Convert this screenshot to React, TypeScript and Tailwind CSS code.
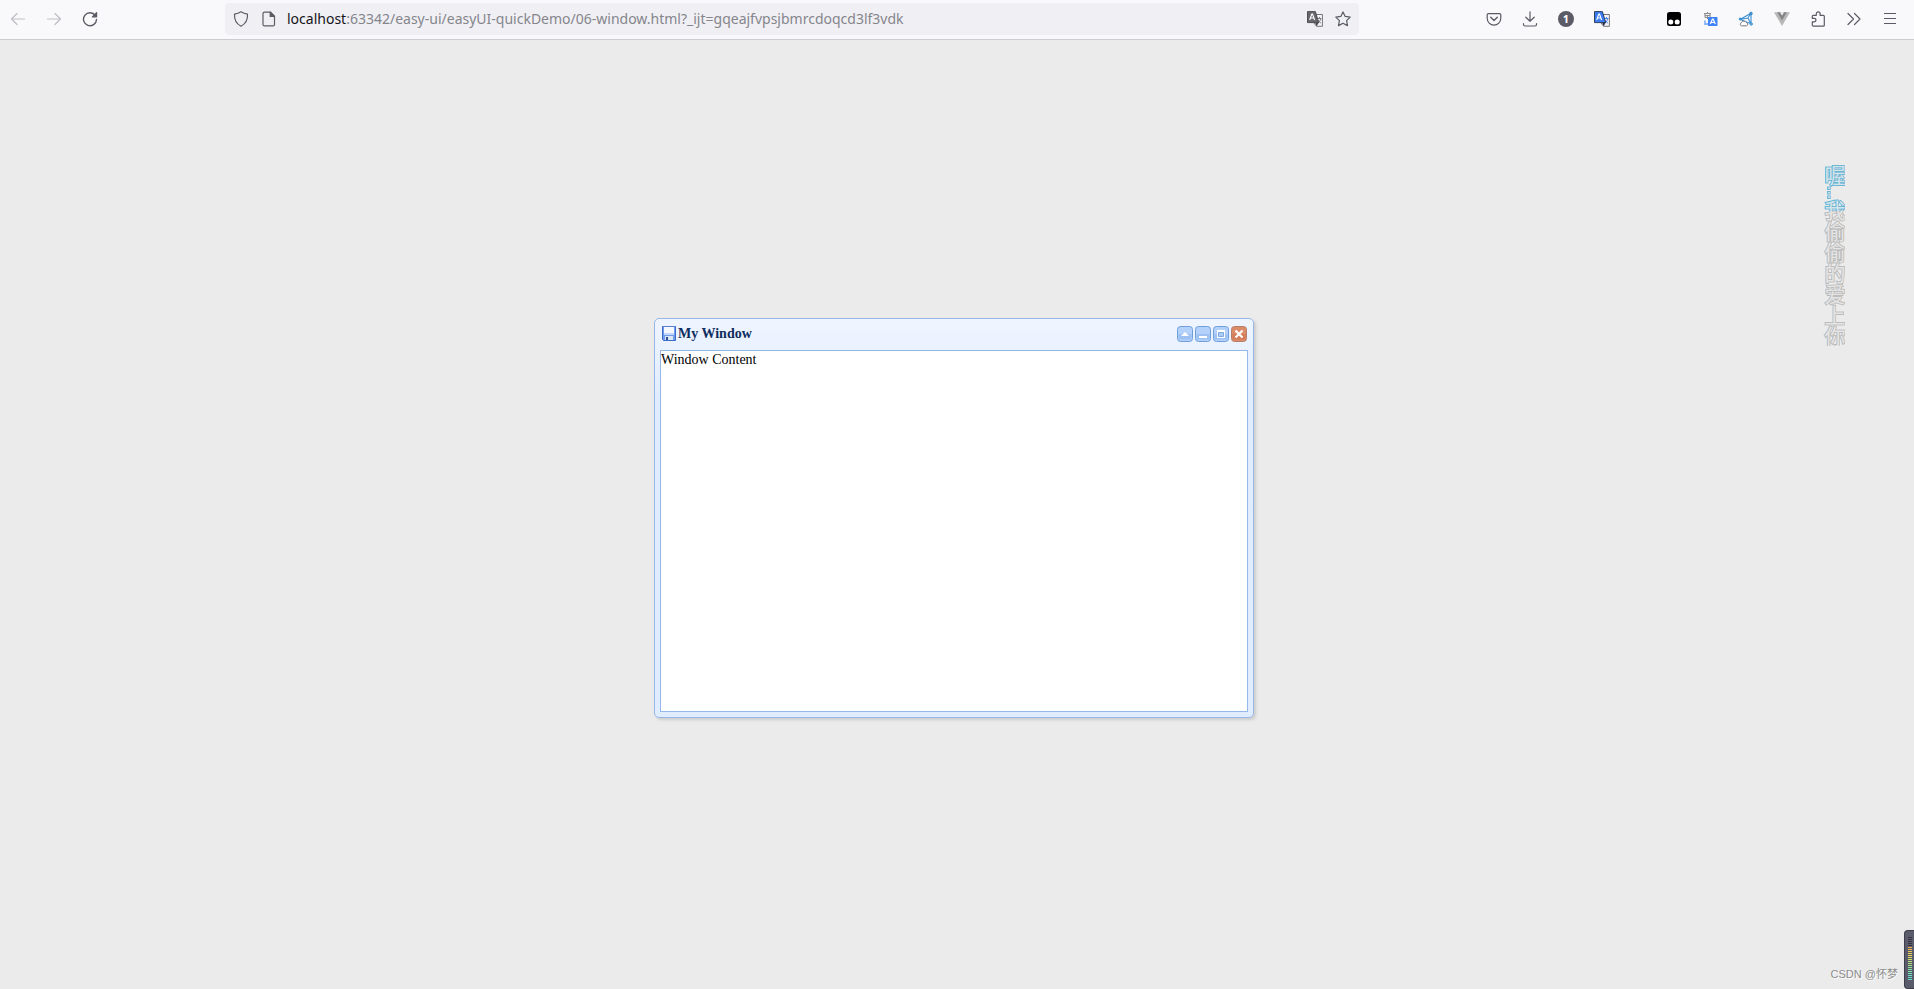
import type { ReactNode } from 'react';

interface ToolButtonProps {
  label: string;
  disabled?: boolean;
  children: ReactNode;
}

function ToolButton({ label, disabled, children }: ToolButtonProps) {
  return (
    <button
      aria-label={label}
      disabled={disabled}
      className="flex h-8 w-9 shrink-0 items-center justify-center rounded text-[#5b5b66] disabled:text-[#bfbfc4]"
    >
      {children}
    </button>
  );
}

function LineIcon({ children }: { children: ReactNode }) {
  return (
    <svg
      viewBox="0 0 16 16"
      className="size-4 shrink-0"
      fill="none"
      stroke="currentColor"
      strokeWidth="1.2"
      strokeLinecap="round"
      strokeLinejoin="round"
    >
      {children}
    </svg>
  );
}

function TranslateIcon({ front, glyph, back }: { front: string; glyph: string; back: string }) {
  return (
    <svg viewBox="0 0 16 16" className="size-4 shrink-0">
      <path d="M8 3.5h7.4v11.8H9.5L7 12z" fill="#f4f4f6" stroke="#55555c" strokeWidth="0.8" />
      <path d="M10.500 7.500h4M12.500 6v1.500M13.800 7.500c-.3 2-1.600 3.500-3 4.500M11 9c.6 1.300 1.800 2.500 3 3" stroke={glyph} strokeWidth="0.9" fill="none" />
      <path d="M.5.6h7.900l3.300 11H.5z" fill={front} stroke={back} strokeWidth="0.9" />
      <path d="m8 11.600 1.700 3.600 2-3.600z" fill={back} />
      <path d="m2.700 9 2.100-6h.7l2.100 6M3.500 7h3.300" stroke="#fff" strokeWidth="1.1" fill="none" />
    </svg>
  );
}

function AddressBar() {
  return (
    <div className="flex h-8 min-w-0 flex-1 items-center rounded bg-[#f0f0f4] px-2 text-[#5b5b66]">
      <button aria-label="Tracking protection" className="mr-3">
        <LineIcon>
          <path d="M8 .8c1.900 1.300 4 2 6.500 2.300.3 5.200-1.800 9.700-6.500 12.100C3.300 12.800 1.200 8.300 1.500 3.100 4 2.800 6.100 2.100 8 .8z" />
        </LineIcon>
      </button>
      <button aria-label="Site information" className="mr-2">
        <LineIcon>
          <path d="M3.500 1.100h6l4 4v8.300a1.500 1.500 0 0 1-1.500 1.500H3.500A1.500 1.500 0 0 1 2 13.400V2.600a1.500 1.500 0 0 1 1.500-1.500z" />
          <path d="M9.200 1.200v4.200h4.200z" fill="currentColor" />
        </LineIcon>
      </button>
      <a href="#" className="min-w-0 flex-1 truncate pl-[2px] text-sm text-[#85858c]">
        <span className="text-[#15141a]">localhost</span>
        :63342/easy-ui/easyUI-quickDemo/06-window.html?_ijt=gqeajfvpsjbmrcdoqcd3lf3vdk
      </a>
      <button aria-label="Translate this page" className="mr-3">
        <TranslateIcon front="#68686c" glyph="#77777c" back="#45454a" />
      </button>
      <button aria-label="Bookmark this page">
        <LineIcon>
          <path d="m8 .9 2.200 4.500 5 .7-3.600 3.500.9 5L8 12.200l-4.500 2.400.9-5L.8 6.100l5-.7z" />
        </LineIcon>
      </button>
    </div>
  );
}

function BrowserToolbar() {
  return (
    <header className="flex h-10 items-start border-b border-[#cccccf] bg-[#f9f9fb] pt-[3px] pr-[6px]">
      <ToolButton label="Back" disabled>
        <LineIcon><path d="M14.500 8h-13M7 2.500 1.500 8 7 13.500" /></LineIcon>
      </ToolButton>
      <ToolButton label="Forward" disabled>
        <LineIcon><path d="M1.500 8h13M9 2.500 14.500 8 9 13.500" /></LineIcon>
      </ToolButton>
      <ToolButton label="Reload">
        <LineIcon>
          <path d="M13.300 4.500A6.500 6.500 0 1 0 14.500 8.500" strokeWidth="1.4" />
          <path d="M14.600 1.600v4.200h-4.200z" fill="currentColor" />
        </LineIcon>
      </ToolButton>
      <div className="w-[117px]" />
      <AddressBar />
      <div className="w-[117px]" />
      <ToolButton label="Save to Pocket">
        <LineIcon>
          <path d="M2.500 2.600h11A1.300 1.300 0 0 1 14.800 4v3.300a6.800 6.800 0 0 1-13.600 0V4a1.300 1.300 0 0 1 1.300-1.400z" />
          <path d="M4.700 6.300 8 9.400l3.300-3.100" strokeWidth="1.4" />
        </LineIcon>
      </ToolButton>
      <ToolButton label="Downloads">
        <LineIcon>
          <path d="M8 .8v9.400M3.800 6.200 8 10.300l4.200-4.100M1.500 12.500v1a1.500 1.500 0 0 0 1.500 1.500h10a1.500 1.500 0 0 0 1.500-1.500v-1" />
        </LineIcon>
      </ToolButton>
      <ToolButton label="Containers">
        <span className="flex size-4 items-center justify-center rounded-full bg-[#5b5b66] text-[11px] font-bold text-white">1</span>
      </ToolButton>
      <ToolButton label="Translate">
        <TranslateIcon front="#3b7cf0" glyph="#3b7cf0" back="#26324f" />
      </ToolButton>
      <div className="w-9" />
      <ToolButton label="Tampermonkey">
        <svg viewBox="0 0 16 16" className="size-4">
          <rect x="1" y="1" width="14" height="14" rx="2.5" fill="#000" />
          <circle cx="4.800" cy="11" r="2.5" fill="#fff" />
          <circle cx="11.200" cy="11" r="2.5" fill="#fff" />
        </svg>
      </ToolButton>
      <ToolButton label="Page translator">
        <svg viewBox="0 0 16 16" className="size-4">
          <path d="M2 2.500h7M5.500 1v1.500M3 4.500h5M3 6.500h5M3 2.500v4M8 2.500v4M5.500 4v4" stroke="#8c8c8c" strokeWidth="1.1" fill="none" />
          <path d="M3 9.500v3.500h3" stroke="#8ab4f8" strokeWidth="1.8" fill="none" />
          <rect x="6" y="6" width="9.500" height="9" rx="0.8" fill="#3f83f8" />
          <path d="m8.300 13 2.200-5h.6l2.200 5M9 11.500h3.400" stroke="#fff" strokeWidth="1.2" fill="none" />
        </svg>
      </ToolButton>
      <ToolButton label="Network helper">
        <svg viewBox="0 0 16 16" className="size-4" fill="none" stroke="#3c8fd0">
          <path d="M2 8.500 13 2.200v10.600zM2 8.500l8-1.500 3-5M10 7l3 6" strokeWidth="1.1" />
          <circle cx="13" cy="2.500" r="1.300" fill="#3c8fd0" />
          <circle cx="2.200" cy="8" r="1" fill="#3c8fd0" />
          <circle cx="13.200" cy="13" r="1.200" fill="#8cc2ea" />
          <path d="M3.500 14.800a1.600 1.600 0 0 1 0-3.100 2.700 2.700 0 0 1 5 0 1.600 1.600 0 0 1 0 3.100z" fill="#fff" stroke="#77777c" />
        </svg>
      </ToolButton>
      <ToolButton label="Vue devtools">
        <svg viewBox="0 0 16 16" className="size-4">
          <path d="M0 1.200h16L8 15z" fill="#b8b8b8" />
          <path d="M3.200 1.200h9.600L8 9.500z" fill="#858585" />
          <path d="M6 1.200h4L8 4.600z" fill="#f9f9fb" />
        </svg>
      </ToolButton>
      <ToolButton label="Extensions">
        <LineIcon>
          <path d="M2.300 14.200v-3.400h2a1.700 1.700 0 0 0 0-3.400h-2V5.300a1 1 0 0 1 1-1h3V2.700a1.900 1.900 0 0 1 3.800 0v1.600h3.200a1 1 0 0 1 1 1v8.900a1 1 0 0 1-1 1h-10a1 1 0 0 1-1-1z" />
        </LineIcon>
      </ToolButton>
      <ToolButton label="More tools">
        <LineIcon><path d="M2 2.500 7.500 8 2 13.500M8.500 2.500 14 8l-5.500 5.500" /></LineIcon>
      </ToolButton>
      <ToolButton label="Application menu">
        <svg viewBox="0 0 16 16" className="size-4" stroke="currentColor">
          <path d="M2 2.500h12M2 7.500h12M2 12.500h12" />
        </svg>
      </ToolButton>
    </header>
  );
}

function WindowTool({ label, danger, children }: { label: string; danger?: boolean; children: ReactNode }) {
  return (
    <button aria-label={label} className="size-4">
      <svg viewBox="0 0 16 16" className="size-4">
        <rect x="0.500" y="0.500" width="15" height="15" rx="3" fill={danger ? '#dc8b69' : '#b3d1fa'} stroke={danger ? '#b87e6c' : '#6f9fd8'} />
        <path d="M1.500 8h13v5.500h-13z" fill={danger ? '#d47b57' : '#9dc1f3'} />
        {children}
      </svg>
    </button>
  );
}

function DemoWindow() {
  return (
    <section className="flex h-[400px] w-[600px] flex-col rounded-[5px] border border-[#95b8e7] bg-linear-to-b from-[#eff5ff] to-[#e0ecff] to-20% p-[5px] font-['Liberation_Serif',serif] text-black shadow-[2px_2px_3px_#cccccc]">
      <div className="flex items-start justify-between px-px pt-[2px] pb-2">
        <h1 className="flex h-4 items-center gap-px text-sm font-bold text-[#0e2d5f]">
          <svg viewBox="0 0 16 16" className="size-4">
            <path d="M1.500.5h13v14h-12l-1-1z" fill="#6f9dec" stroke="#3a6acb" />
            <path d="M3 1h10v8H3z" fill="#f5f9ff" />
            <path d="M3 7h10v2H3z" fill="#c3d8f7" />
            <path d="M4 10h8v4H4z" fill="#dde8f6" />
            <path d="M5 11h2v3H5z" fill="#2b4f96" />
            <path d="M2 .5h12" stroke="#5a80cc" />
          </svg>
          My Window
        </h1>
        <div className="flex gap-[2px]">
          <WindowTool label="Collapse">
            <path d="m4 10 4-4 4 4z" fill="#fff" />
          </WindowTool>
          <WindowTool label="Minimize">
            <path d="M4 10h8v2H4z" fill="#fff" />
          </WindowTool>
          <WindowTool label="Maximize">
            <path d="M4 4h8v8H4z" fill="#fff" />
            <path d="M5.500 6.500h5v4h-5z" fill="#aaccf8" stroke="#7ea9de" />
          </WindowTool>
          <WindowTool label="Close" danger>
            <path d="m4.500 4.500 7 7m0-7-7 7" stroke="#fff" strokeWidth="2.2" />
          </WindowTool>
        </div>
      </div>
      <div className="flex-1 border border-[#95b8e7] bg-white">
        <p className="text-sm leading-[18px]">Window Content</p>
      </div>
    </section>
  );
}

function LyricOverlay() {
  return (
    <p className="absolute top-[165px] right-[69px] bg-linear-to-b from-[#6cb6d6] from-[46px] to-[#bcbcbc] to-[46px] bg-clip-text font-['Liberation_Sans','Noto_Sans_CJK_SC',sans-serif] text-[21px] leading-6 text-[#f0f0f0]/80 [writing-mode:vertical-rl] [-webkit-text-stroke:2px_transparent]">
      喔<span className="text-base">...</span>我偷偷的爱上你
    </p>
  );
}

const meterColors = [
  '#33343f', '#33343f', '#33343f', '#33343f', '#33343f',
  '#f0ac50', '#f0b852', '#eec454', '#ecd056', '#e8da5c', '#dee062', '#d0e26a', '#c0e474',
  '#b0e47e', '#a0e48a', '#92e496', '#86e4a4', '#7ce4b0', '#74e2bc', '#6ce2c6', '#66e0ce', '#62e0d4',
];

function VolumeMeter() {
  return (
    <div className="absolute right-0 bottom-0 flex h-[59px] w-[10px] flex-col items-center gap-px rounded-l border border-r-0 border-[#3c3d49] bg-[#5b5c6b] pt-[6px]">
      {meterColors.map((color, i) => (
        <span key={i} className="h-px w-1 shrink-0" style={{ backgroundColor: color }} />
      ))}
    </div>
  );
}

export default function App() {
  return (
    <div className="relative flex min-h-screen flex-col bg-[#ebebeb] font-['Noto_Sans','Noto_Sans_CJK_SC',sans-serif]">
      <BrowserToolbar />
      <main className="flex flex-1 items-center justify-center pt-[6px] pr-[6px]">
        <DemoWindow />
      </main>
      <LyricOverlay />
      <p className="absolute right-4 bottom-[7px] font-['Liberation_Sans','Noto_Sans_CJK_SC',sans-serif] text-[11px] leading-4 text-[#8c8c8c] [text-shadow:1px_1px_1px_#ffffff]">
        CSDN @怀梦
      </p>
      <VolumeMeter />
    </div>
  );
}
